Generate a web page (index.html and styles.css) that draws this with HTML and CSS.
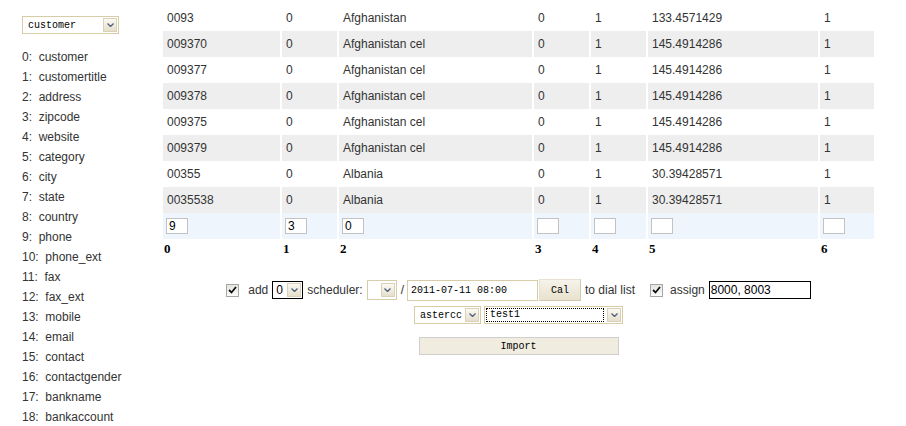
FILE: index.html
```html
<!DOCTYPE html>
<html lang="en">

<head>
    <meta charset="UTF-8">
    <title>Import Customers</title>
    <link rel="stylesheet" href="styles.css">
</head>

<body>

    <div class="page">
        <div class="sidebar">
            <span class="sel sel-field">
                <span class="sel-text">customer</span>
                <span class="sel-btn"><svg width="7" height="4" viewBox="0 0 7 4"><path d="M0.5 0.5 L3.5 3.5 L6.5 0.5" /></svg></span>
            </span>

            <ul class="fields">
                <li>0:&nbsp; customer</li>
                <li>1:&nbsp; customertitle</li>
                <li>2:&nbsp; address</li>
                <li>3:&nbsp; zipcode</li>
                <li>4:&nbsp; website</li>
                <li>5:&nbsp; category</li>
                <li>6:&nbsp; city</li>
                <li>7:&nbsp; state</li>
                <li>8:&nbsp; country</li>
                <li>9:&nbsp; phone</li>
                <li>10:&nbsp; phone_ext</li>
                <li>11:&nbsp; fax</li>
                <li>12:&nbsp; fax_ext</li>
                <li>13:&nbsp; mobile</li>
                <li>14:&nbsp; email</li>
                <li>15:&nbsp; contact</li>
                <li>16:&nbsp; contactgender</li>
                <li>17:&nbsp; bankname</li>
                <li>18:&nbsp; bankaccount</li>
            </ul>
        </div>

        <div class="main">
            <table class="grid">
                <colgroup>
                    <col class="c0">
                    <col class="c1">
                    <col class="c2">
                    <col class="c3">
                    <col class="c4">
                    <col class="c5">
                    <col class="c6">
                </colgroup>
                <tbody>
                    <tr><td>0093</td><td>0</td><td>Afghanistan</td><td>0</td><td>1</td><td>133.4571429</td><td>1</td></tr>
                    <tr class="alt"><td>009370</td><td>0</td><td>Afghanistan cel</td><td>0</td><td>1</td><td>145.4914286</td><td>1</td></tr>
                    <tr><td>009377</td><td>0</td><td>Afghanistan cel</td><td>0</td><td>1</td><td>145.4914286</td><td>1</td></tr>
                    <tr class="alt"><td>009378</td><td>0</td><td>Afghanistan cel</td><td>0</td><td>1</td><td>145.4914286</td><td>1</td></tr>
                    <tr><td>009375</td><td>0</td><td>Afghanistan cel</td><td>0</td><td>1</td><td>145.4914286</td><td>1</td></tr>
                    <tr class="alt"><td>009379</td><td>0</td><td>Afghanistan cel</td><td>0</td><td>1</td><td>145.4914286</td><td>1</td></tr>
                    <tr><td>00355</td><td>0</td><td>Albania</td><td>0</td><td>1</td><td>30.39428571</td><td>1</td></tr>
                    <tr class="alt"><td>0035538</td><td>0</td><td>Albania</td><td>0</td><td>1</td><td>30.39428571</td><td>1</td></tr>
                    <tr class="map">
                        <td><input class="map-input" type="text" value="9"></td>
                        <td><input class="map-input" type="text" value="3"></td>
                        <td><input class="map-input" type="text" value="0"></td>
                        <td><input class="map-input" type="text"></td>
                        <td><input class="map-input" type="text"></td>
                        <td><input class="map-input" type="text"></td>
                        <td><input class="map-input" type="text"></td>
                    </tr>
                    <tr class="nums"><td>0</td><td>1</td><td>2</td><td>3</td><td>4</td><td>5</td><td>6</td></tr>
                </tbody>
            </table>

            <div class="controls row-first">
                <span class="check"><svg width="9" height="8" viewBox="0 0 9 8"><path d="M1 4 L3.5 6.5 L8 1" /></svg></span>
                <span class="lbl lbl-add">add</span>
                <span class="sel sel-add">
                    <span class="sel-text">0</span>
                    <span class="sel-btn"><svg width="7" height="4" viewBox="0 0 7 4"><path d="M0.5 0.5 L3.5 3.5 L6.5 0.5" /></svg></span>
                </span>
                <span class="lbl lbl-sched">scheduler:</span>
                <span class="sel sel-sched">
                    <span class="sel-text"></span>
                    <span class="sel-btn"><svg width="7" height="4" viewBox="0 0 7 4"><path d="M0.5 0.5 L3.5 3.5 L6.5 0.5" /></svg></span>
                </span>
                <span class="lbl lbl-slash">/</span>
                <input class="date-input" type="text" value="2011-07-11 08:00">
                <button class="cal-btn" type="button">Cal</button>
                <span class="lbl lbl-dial">to dial list</span>
                <span class="check"><svg width="9" height="8" viewBox="0 0 9 8"><path d="M1 4 L3.5 6.5 L8 1" /></svg></span>
                <span class="lbl lbl-assign">assign</span>
                <input class="assign-input" type="text" value="8000, 8003">
            </div>

            <div class="controls row-second">
                <span class="sel sel-server">
                    <span class="sel-text">astercc</span>
                    <span class="sel-btn"><svg width="7" height="4" viewBox="0 0 7 4"><path d="M0.5 0.5 L3.5 3.5 L6.5 0.5" /></svg></span>
                </span>
                <span class="sel sel-campaign">
                    <span class="sel-text focused">test1</span>
                    <span class="sel-btn"><svg width="7" height="4" viewBox="0 0 7 4"><path d="M0.5 0.5 L3.5 3.5 L6.5 0.5" /></svg></span>
                </span>
            </div>

            <div class="controls row-third">
                <button class="import-btn" type="button">Import</button>
            </div>
        </div>
    </div>

</body>

</html>
```

FILE: styles.css
```css
body {
    margin: 0;
    padding: 0;
    background-color: #fff;
    font-family: "Liberation Sans", Arial, sans-serif;
    font-size: 12px;
    color: #333;
}

.page {
    display: flex;
    align-items: flex-start;
}

/* left column: field list */

.sidebar {
    width: 139px;
    padding: 15px 0 0 22px;
}

.fields {
    list-style: none;
    margin: 13px 0 0 0;
    padding: 0;
}

.fields li {
    height: 20px;
    line-height: 20px;
}

/* fake select boxes */

.sel {
    display: flex;
    align-items: center;
    box-sizing: border-box;
    border: 1px solid #d6cca6;
    background-color: #fff;
    font-family: "Liberation Mono", "Courier New", monospace;
    font-size: 10px;
    color: #000;
}

.sel-text {
    flex: 1;
    padding-left: 5px;
    white-space: pre;
}

.sel-btn {
    display: flex;
    align-items: center;
    justify-content: center;
    box-sizing: border-box;
    width: 14px;
    height: 14px;
    margin-right: 1px;
    border: 1px solid #d9d1b8;
    background: linear-gradient(#fbf9f3, #e6dfcb);
}

.sel-btn svg path {
    fill: none;
    stroke: #4d5d7a;
    stroke-width: 1.3;
}

.sel-field {
    width: 97px;
    height: 18px;
    margin-top: 1px;
}

/* data table */

.main {
    width: 715px;
    padding-top: 5px;
}

.grid {
    width: 715px;
    table-layout: fixed;
    border-collapse: separate;
    border-spacing: 2px 0;
}

.c0 { width: 117px; }
.c1 { width: 55px; }
.c2 { width: 193px; }
.c3 { width: 55px; }
.c4 { width: 55px; }
.c5 { width: 170px; }
.c6 { width: 54px; }

.grid td {
    height: 26px;
    padding: 0 4px;
    box-sizing: border-box;
    white-space: nowrap;
    vertical-align: middle;
}

.grid tr.alt td {
    background-color: #eeeeee;
}

.grid tr.map td {
    background-color: #eef5fc;
    padding: 0 3px;
}

.map-input {
    display: block;
    box-sizing: border-box;
    width: 22px;
    height: 16px;
    margin: 0;
    padding: 0 2px;
    border: 1px solid #c2c2c2;
    font-family: "Liberation Sans", Arial, sans-serif;
    font-size: 12px;
    color: #000;
}

.grid tr.nums td {
    height: 20px;
    padding: 0 1px;
    font-family: "Liberation Serif", "Times New Roman", serif;
    font-weight: bold;
    font-size: 13px;
    color: #000;
}

/* import controls */

.controls {
    display: flex;
    align-items: center;
    justify-content: center;
}

.row-first {
    margin-top: 20px;
    height: 22px;
}

.row-second {
    margin-top: 5px;
}

.row-third {
    margin-top: 13px;
}

.check {
    display: flex;
    align-items: center;
    justify-content: center;
    box-sizing: border-box;
    width: 13px;
    height: 13px;
    border: 1px solid #a6a6a6;
    background: linear-gradient(#e4e4e0, #fbfbfb);
}

.check svg path {
    fill: none;
    stroke: #111;
    stroke-width: 1.8;
}

.lbl {
    white-space: nowrap;
}

.lbl-add { margin: 0 4px 0 9px; }
.lbl-sched { margin: 0 4px 0 4px; }
.lbl-slash { margin: 0 3px 0 4px; }
.lbl-dial { margin: 0 15px 0 4px; }
.lbl-assign { margin: 0 4px 0 7px; }

.sel-add {
    width: 31px;
    height: 18px;
    border-color: #000;
    font-family: "Liberation Sans", Arial, sans-serif;
    font-size: 12px;
}

.sel-add .sel-text {
    padding-left: 3px;
}

.sel-sched {
    width: 30px;
    height: 20px;
}

.date-input {
    box-sizing: border-box;
    width: 131px;
    height: 21px;
    margin: 0;
    padding: 0 3px;
    border: 1px solid #d6cca6;
    font-family: "Liberation Mono", "Courier New", monospace;
    font-size: 10px;
    color: #000;
}

.cal-btn {
    box-sizing: border-box;
    width: 42px;
    height: 22px;
    margin: 0 0 0 1px;
    padding: 0;
    border: 1px solid #e6e1d2;
    border-right-color: #cfc8b3;
    border-bottom-color: #cfc8b3;
    background: linear-gradient(#f6f3ea, #e8e1cd);
    font-family: "Liberation Mono", "Courier New", monospace;
    font-size: 10px;
    color: #000;
}

.assign-input {
    box-sizing: border-box;
    width: 102px;
    height: 18px;
    margin: 0;
    padding: 0 1px;
    border: 1px solid #000;
    font-family: "Liberation Sans", Arial, sans-serif;
    font-size: 12px;
    color: #000;
}

.sel-server {
    width: 67px;
    height: 18px;
    margin-right: 3px;
}

.sel-campaign {
    width: 139px;
    height: 18px;
}

.sel-campaign .sel-text {
    margin: 1px 3px 1px 1px;
    padding-left: 3px;
    border: 1px dotted #000;
    line-height: 12px;
}

.import-btn {
    box-sizing: border-box;
    width: 200px;
    height: 18px;
    margin: 0;
    padding: 0;
    border: 1px solid #cfcfcf;
    background-color: #f0ecdf;
    font-family: "Liberation Mono", "Courier New", monospace;
    font-size: 10px;
    color: #000;
}
```
